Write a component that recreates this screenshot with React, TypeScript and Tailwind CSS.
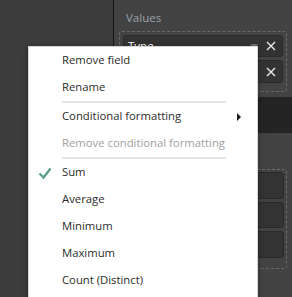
import React from 'react';

const font = { fontFamily: '"Open Sans", "Noto Sans", Arial, sans-serif' };

const Chip = ({ label, h }: { label?: string; h: string }) => (
  <div className={`flex items-center ${h} rounded-[3px] border border-[#2a2a2a] bg-[#333333] pl-[4px] pr-[6px]`}>
    <span className="flex-1 text-[11.5px] text-white">{label}</span>
    {label !== undefined && (
      <>
        <svg width="8" height="5" viewBox="0 0 8 5" className="mr-[8px]">
          <path d="M0 0h8L4 5z" fill="#6e6e6e" />
        </svg>
        <svg width="10" height="10" viewBox="0 0 10 10">
          <path d="M1 1l8 8M9 1l-8 8" stroke="#e8e8e8" strokeWidth="1.4" />
        </svg>
      </>
    )}
  </div>
);

const Item = ({ label, disabled, checked, sub }: { label: string; disabled?: boolean; checked?: boolean; sub?: boolean }) => (
  <div className="relative flex items-center h-[27px] pl-[33px] pr-[16px]">
    {checked && (
      <svg width="14" height="12" viewBox="0 0 14 12" className="absolute left-[9px] top-[8px]">
        <path d="M1.5 6.5l4 4L12.5 1.5" fill="none" stroke="#5c9f8c" strokeWidth="2.4" />
      </svg>
    )}
    <span className={`flex-1 text-[11.3px] ${disabled ? 'text-[#a0a0a0]' : 'text-[#2b2b2b]'}`}>{label}</span>
    {sub && (
      <svg width="4" height="8" viewBox="0 0 4 8">
        <path d="M0 0l4 4-4 4z" fill="#1a1a1a" />
      </svg>
    )}
  </div>
);

const Sep = () => <div className="ml-[33px] mr-[31px] h-[2px] bg-[#e3e3e3]" />;

export default function App() {
  return (
    <div className="relative flex w-[292px] h-[297px] overflow-hidden" style={font}>
      {/* left area */}
      <div className="w-[114px] bg-[#3c3c3c] border-r border-[#161616]" />

      {/* field panel */}
      <div className="flex-1 flex flex-col bg-[#434343]">
        <div className="px-[5px] pt-[10px]">
          <div className="pl-[7px] text-[11.5px] leading-[16px] text-[#9ba2ab]">Values</div>
          <div className="mt-[5px] flex flex-col gap-[3px] rounded-[3px] border border-dashed border-[#6b6b6b] p-[3px] pb-[8px]">
            <Chip label="Type" h="h-[22px]" />
            <Chip label="" h="h-[23px]" />
          </div>
        </div>
        <div className="mt-[5px] h-[36px] bg-[#242424]" />
        <div className="px-[5px] pt-[36px]">
          <div className="flex flex-col gap-[3px] rounded-[3px] border border-dashed border-[#6b6b6b] p-[2px] pb-[10px]">
            <Chip h="h-[27px]" />
            <Chip h="h-[26px]" />
            <Chip h="h-[27px]" />
          </div>
        </div>
      </div>

      {/* context menu */}
      <div className="absolute left-[28px] top-[46px] w-[230px] h-[260px] bg-white border border-[#d6d6d6] shadow-[0_2px_6px_rgba(0,0,0,0.35)]">
        <Item label="Remove field" />
        <Item label="Rename" />
        <Sep />
        <Item label="Conditional formatting" sub />
        <Item label="Remove conditional formatting" disabled />
        <Sep />
        <Item label="Sum" checked />
        <Item label="Average" />
        <Item label="Minimum" />
        <Item label="Maximum" />
        <Item label="Count (Distinct)" />
      </div>
    </div>
  );
}
